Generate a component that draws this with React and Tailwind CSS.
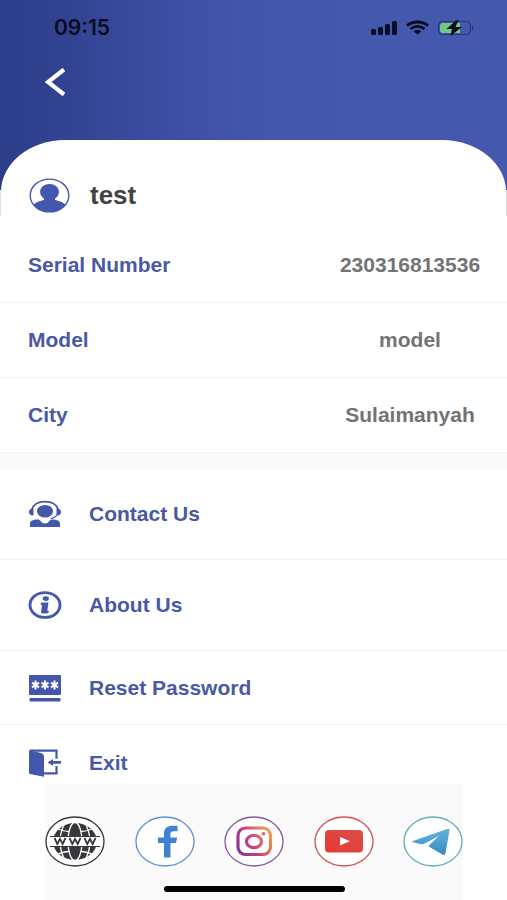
import React from "react";

const details = [
  { label: "Serial Number", value: "230316813536" },
  { label: "Model", value: "model" },
  { label: "City", value: "Sulaimanyah" },
];

function StatusIcons() {
  return (
    <svg width="103" height="16" viewBox="0 0 103 16" fill="#080d20">
      {/* Signal */}
      <rect x="0" y="9" width="5" height="6" rx="1.5" />
      <rect x="7" y="7" width="5" height="8" rx="1.5" />
      <rect x="14" y="4" width="5" height="11" rx="1.5" />
      <rect x="21" y="1" width="5" height="14" rx="1.5" />
      {/* Wifi */}
      <g fill="none" stroke="#080d20" strokeWidth="2.8">
        <path d="M36 5.6C42 .8 51 .8 57 5.6" />
        <path d="M39.5 9C44 5.6 49 5.6 53.5 9" />
      </g>
      <path d="M42.5 11.2C45 9.5 48 9.5 50.5 11.2L46.5 14.5Z" />
      {/* Battery */}
      <rect x="67.5" y="1.5" width="32" height="13" rx="4" fill="none" stroke="#28366f" strokeWidth="1.2" />
      <path d="M101 6c2 .8 2 3.7 0 4.5Z" fill="#28366f" />
      <path d="M72 3h17v10H72q-3 0-3-3V6q0-3 3-3Z" fill="#72c687" />
      <path d="M85.5 0 75.5 9h5.5L79.5 16 91 7h-6.5L87.5 0Z" />
    </svg>
  );
}

function AvatarIcon() {
  return (
    <svg width="41" height="35" viewBox="0 0 41 35">
      <defs>
        <clipPath id="avatar">
          <ellipse cx="20.5" cy="17.5" rx="19.3" ry="16.5" />
        </clipPath>
      </defs>
      <g fill="#4357ad" clipPath="url(#avatar)">
        <ellipse cx="20.5" cy="14" rx="9.5" ry="8" />
        <path d="M15 18h11v4c6 1.5 11 3 12 8v5H3v-5c1-5 6-6.5 12-8Z" />
      </g>
      <ellipse cx="20.5" cy="17.5" rx="19.3" ry="16.4" fill="none" stroke="#4357ad" strokeWidth="1.4" />
    </svg>
  );
}

function SupportIcon() {
  return (
    <svg width="34" height="28" viewBox="0 0 34 28" fill="#4357ad">
      <path d="M4 9.5C5.5 4 10.5 1.6 17 1.6S28.5 4 30 9.5" fill="none" stroke="#4357ad" strokeWidth="1.7" />
      <path d="M5.5 8.5v7C3 16 1 14.500 1 12S3 8 5.500 8.500ZM28.500 8.500v7c2.500.5 4.500-1 4.500-3.500S31 8 28.500 8.500Z" />
      <ellipse cx="17" cy="11.3" rx="8" ry="6.3" />
      <path d="M29 14.5c-1 2.200-3 3.700-6.500 4" fill="none" stroke="#4357ad" strokeWidth="1.2" />
      <path d="M10.5 19.5C4 19.5 2 21 2 24v3h30v-3c0-3-2-4.5-8.5-4.5-2 0-2.800 4-6.500 4s-4.500-4-6.500-4Z" />
    </svg>
  );
}

function InfoIcon() {
  return (
    <svg width="34" height="28" viewBox="0 0 34 28">
      <ellipse cx="17" cy="14" rx="15" ry="12.4" fill="none" stroke="#4357ad" strokeWidth="2.9" />
      <ellipse cx="17.8" cy="7.6" rx="3.1" ry="2.3" fill="#4357ad" />
      <path d="M13 11.5h7.5l-1.200 8.200h1.700l-.4 1.900c-2 1.300-6 1.300-7.600.2l1-8.100h-1.400Z" fill="#4357ad" />
    </svg>
  );
}

function PasswordIcon() {
  return (
    <svg width="34" height="28" viewBox="0 0 34 28">
      <rect x="1" y="1" width="32" height="20" rx="1" fill="#4357ad" />
      <rect x="1.5" y="24" width="31" height="3.5" rx="1" fill="#4357ad" />
      <g stroke="#fff" strokeWidth="2">
        <path d="M7.5 6.5v9M4 8.6l7 4.8M11 8.6l-7 4.8" />
        <path d="M17 6.5v9M13.5 8.6l7 4.8M20.5 8.6l-7 4.8" />
        <path d="M26.5 6.5v9M23 8.6l7 4.8M30 8.6l-7 4.8" />
      </g>
    </svg>
  );
}

function ExitIcon() {
  return (
    <svg width="34" height="28" viewBox="0 0 34 28">
      <path d="M2 1.7h26.5v8M28.5 17v7.3H15" fill="none" stroke="#4357ad" strokeWidth="2.2" />
      <path d="M1 1.2 13 4q3 .8 3 3v20.8L3 25.3Q1 25 1 23.5Z" fill="#4357ad" />
      <path d="M19.5 13.4 25 10v2h8v2.8h-8v2Z" fill="#4357ad" />
    </svg>
  );
}

const menu = [
  { label: "Contact Us", Icon: SupportIcon, size: "h-[91px]" },
  { label: "About Us", Icon: InfoIcon, size: "h-[91px]" },
  { label: "Reset Password", Icon: PasswordIcon, size: "h-[74px]" },
  { label: "Exit", Icon: ExitIcon, size: "h-[59px] pt-4" },
];

// Oval outline shared by all the social links
function Oval({ color, children }) {
  return (
    <svg width="60" height="51" viewBox="0 0 60 51">
      <ellipse cx="30" cy="25.5" rx="29" ry="24.5" fill="#fff" stroke={color} strokeWidth="1.3" />
      {children}
    </svg>
  );
}

const socials = [
  {
    name: "Website",
    icon: (
      <Oval color="#38383c">
        <ellipse cx="30" cy="25.5" rx="22" ry="18.5" fill="#38383c" />
        <g fill="none" stroke="#fff" strokeWidth="1.3">
          <ellipse cx="30" cy="25.5" rx="7" ry="19" />
          <path d="M21 5Q9 25.5 21 46M39 5q12 20.5 0 41" />
          <path d="M12 12.5q7 3 12 3M48 12.5q-7 3-12 3M12 38.5q7-3 12-3M48 38.5q-7-3-12-3" />
        </g>
        <rect x="5" y="20.5" width="50" height="10" fill="#fff" />
        <path d="M5 20.5h50M5 30.5h50" stroke="#38383c" strokeWidth="1.2" />
        <path
          d="M9.5 22l2.8 6 2.7-5 2.7 5 2.8-6M24.5 22l2.8 6 2.7-5 2.7 5 2.8-6M39.5 22l2.8 6 2.7-5 2.7 5 2.8-6"
          fill="none"
          stroke="#38383c"
          strokeWidth="1.8"
        />
      </Oval>
    ),
  },
  {
    name: "Facebook",
    icon: (
      <Oval color="#6290d5">
        <path
          d="M29 41.5V27h-6v-5.5h6v-4.2c0-5 3.5-7.5 8.5-7.5h5v5.4h-3.7c-2.3 0-3.3.8-3.3 2.5v3.8h6.700L41 27h-5.500v14.500Z"
          fill="#4280d6"
        />
      </Oval>
    ),
  },
  {
    name: "Instagram",
    icon: (
      <Oval color="#8658a0">
        <defs>
          <linearGradient id="insta" x1="13" y1="36" x2="47" y2="16" gradientUnits="userSpaceOnUse">
            <stop offset="0" stopColor="#7c359c" />
            <stop offset=".45" stopColor="#d04078" />
            <stop offset="1" stopColor="#eda350" />
          </linearGradient>
        </defs>
        <g fill="none" stroke="url(#insta)">
          <rect x="14" y="12" width="32.5" height="26.5" rx="7.5" strokeWidth="3.2" />
          <ellipse cx="30" cy="25.5" rx="7.5" ry="6.2" strokeWidth="3.2" />
        </g>
        <ellipse cx="39.5" cy="17.7" rx="2" ry="1.7" fill="#d86f69" />
      </Oval>
    ),
  },
  {
    name: "YouTube",
    icon: (
      <Oval color="#cd5450">
        <defs>
          <linearGradient id="tube" x1="0" y1="1" x2="1" y2="0">
            <stop offset="0" stopColor="#e93831" />
            <stop offset="1" stopColor="#d8504a" />
          </linearGradient>
        </defs>
        <rect x="11" y="14" width="38" height="22.5" rx="4" fill="url(#tube)" />
        <path d="M26 21v8.5l10-4.2Z" fill="#fff" />
      </Oval>
    ),
  },
  {
    name: "Telegram",
    icon: (
      <Oval color="#64aebb">
        <defs>
          <linearGradient id="tele" x1="0" y1="0" x2="0" y2="1">
            <stop offset="0" stopColor="#65b3dc" />
            <stop offset="1" stopColor="#3789c6" />
          </linearGradient>
        </defs>
        <path
          d="M10 25 44 13q3-1 2.5 1.5L42.500 37q-.5 3-3 1.500L26.500 31q-1.500-1 0-2.200L36 20 21.500 27.500q-2 1-4 .4L10 26.300q-2-.6 0-1.300Z"
          fill="url(#tele)"
        />
      </Oval>
    ),
  },
];

export default function App() {
  return (
    <div className="min-h-screen bg-white font-['Liberation_Sans',Arial,sans-serif] text-[21px] leading-7 font-bold text-[#4a59a3]">
      <div className="bg-[#dedede]">
        <header className="h-[190px] bg-[linear-gradient(90deg,#2c3d89_0%,#324391_14%,#3b4da0_30%,#4155aa_48%,#4458ae_70%)]">
          <div className="flex items-center justify-between pt-4 pr-[33px] pl-[54px]">
            <span className="font-[Inter,sans-serif] leading-6 font-semibold text-[#080d20]">09:15</span>
            <StatusIcons />
          </div>
          <button type="button" aria-label="Back" className="mt-6 ml-[41px] block p-1">
            <svg width="21" height="28" viewBox="0 0 21 28">
              <path d="M19 1.5 3 14l16 12.500" fill="none" stroke="#fff" strokeWidth="4.2" />
            </svg>
          </button>
        </header>

        <div className="-mt-[50px] px-px">
          <div className="flex h-[76px] items-center gap-5 rounded-t-[64px_52px] bg-white pt-[34px] pl-7">
            <AvatarIcon />
            <h1 className="text-[26px] text-[#434345]">test</h1>
          </div>
        </div>
      </div>

      {/* Device details */}
      <dl className="pt-3">
        {details.map((item) => (
          <div key={item.label} className="flex h-[75px] items-center justify-between border-b border-[#f2f2f3] pl-7">
            <dt>{item.label}</dt>
            <dd className="w-[194px] text-center text-[#737375]">{item.value}</dd>
          </div>
        ))}
      </dl>

      <div className="h-4 bg-[#fafafa]" />

      {/* Menu */}
      <nav className="divide-y divide-[#f2f2f3]">
        {menu.map(({ label, Icon, size }) => (
          <button key={label} type="button" className={`flex w-full items-center gap-[27px] pl-7 text-left ${size}`}>
            <Icon />
            <span>{label}</span>
          </button>
        ))}
      </nav>

      {/* Social links */}
      <footer className="mr-[44px] ml-[45px] bg-[#fafafa] pt-8 pb-2">
        <div className="flex justify-between">
          {socials.map((social) => (
            <a key={social.name} href="#" aria-label={social.name} className="block">
              {social.icon}
            </a>
          ))}
        </div>
        <div className="mx-auto mt-[19px] h-[6px] w-[181px] rounded-full bg-black" />
      </footer>
    </div>
  );
}
